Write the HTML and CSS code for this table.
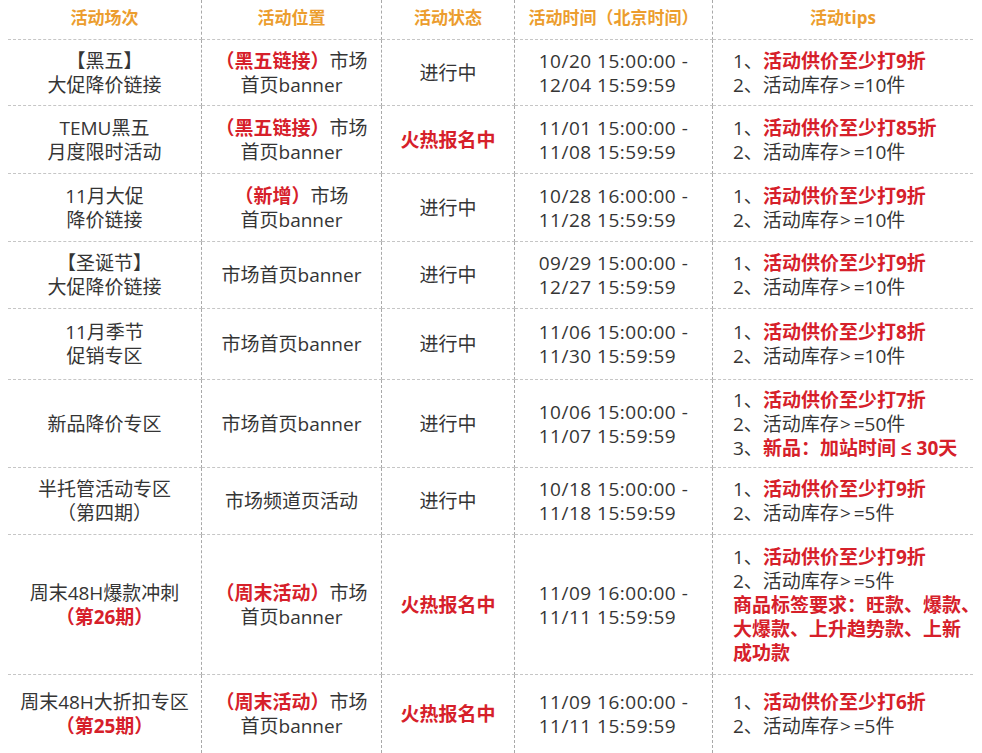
FILE: index.html
```html
<!DOCTYPE html>
<html lang="zh-CN">
<head>
<meta charset="utf-8">
<title>活动列表</title>
<link rel="stylesheet" href="styles.css">
</head>
<body>
<div class="sheet">
  <div class="cell head"><div>活动场次</div></div>
  <div class="cell head"><div>活动位置</div></div>
  <div class="cell head"><div>活动状态</div></div>
  <div class="cell head"><div>活动时间（北京时间）</div></div>
  <div class="cell head last"><div>活动tips</div></div>

  <div class="cell"><div>【黑五】<br>大促降价链接</div></div>
  <div class="cell"><div><span class="red">（黑五链接）</span>市场<br>首页banner</div></div>
  <div class="cell"><div>进行中</div></div>
  <div class="cell"><div class="block">10/20 15:00:00 -<br>12/04 15:59:59</div></div>
  <div class="cell tips last"><div>1、<span class="red">活动供价至少打9折</span></div><div>2、活动库存<span class="gt">&gt;</span>=10件</div></div>

  <div class="cell"><div>TEMU黑五<br>月度限时活动</div></div>
  <div class="cell"><div><span class="red">（黑五链接）</span>市场<br>首页banner</div></div>
  <div class="cell"><div class="red">火热报名中</div></div>
  <div class="cell"><div class="block">11/01 15:00:00 -<br>11/08 15:59:59</div></div>
  <div class="cell tips last"><div>1、<span class="red">活动供价至少打85折</span></div><div>2、活动库存<span class="gt">&gt;</span>=10件</div></div>

  <div class="cell"><div>11月大促<br>降价链接</div></div>
  <div class="cell"><div><span class="red">（新增）</span>市场<br>首页banner</div></div>
  <div class="cell"><div>进行中</div></div>
  <div class="cell"><div class="block">10/28 16:00:00 -<br>11/28 15:59:59</div></div>
  <div class="cell tips last"><div>1、<span class="red">活动供价至少打9折</span></div><div>2、活动库存<span class="gt">&gt;</span>=10件</div></div>

  <div class="cell"><div>【圣诞节】<br>大促降价链接</div></div>
  <div class="cell"><div>市场首页banner</div></div>
  <div class="cell"><div>进行中</div></div>
  <div class="cell"><div class="block">09/29 15:00:00 -<br>12/27 15:59:59</div></div>
  <div class="cell tips last"><div>1、<span class="red">活动供价至少打9折</span></div><div>2、活动库存<span class="gt">&gt;</span>=10件</div></div>

  <div class="cell"><div>11月季节<br>促销专区</div></div>
  <div class="cell"><div>市场首页banner</div></div>
  <div class="cell"><div>进行中</div></div>
  <div class="cell"><div class="block">11/06 15:00:00 -<br>11/30 15:59:59</div></div>
  <div class="cell tips last"><div>1、<span class="red">活动供价至少打8折</span></div><div>2、活动库存<span class="gt">&gt;</span>=10件</div></div>

  <div class="cell"><div>新品降价专区</div></div>
  <div class="cell"><div>市场首页banner</div></div>
  <div class="cell"><div>进行中</div></div>
  <div class="cell"><div class="block">10/06 15:00:00 -<br>11/07 15:59:59</div></div>
  <div class="cell tips last"><div>1、<span class="red">活动供价至少打7折</span></div><div>2、活动库存<span class="gt">&gt;</span>=50件</div><div>3、<span class="red">新品：加站时间 ≤ 30天</span></div></div>

  <div class="cell"><div>半托管活动专区<br>（第四期）</div></div>
  <div class="cell"><div>市场频道页活动</div></div>
  <div class="cell"><div>进行中</div></div>
  <div class="cell"><div class="block">10/18 15:00:00 -<br>11/18 15:59:59</div></div>
  <div class="cell tips last"><div>1、<span class="red">活动供价至少打9折</span></div><div>2、活动库存<span class="gt">&gt;</span>=5件</div></div>

  <div class="cell"><div>周末48H爆款冲刺<br><span class="red">（第26期）</span></div></div>
  <div class="cell"><div><span class="red">（周末活动）</span>市场<br>首页banner</div></div>
  <div class="cell"><div class="red">火热报名中</div></div>
  <div class="cell"><div class="block">11/09 16:00:00 -<br>11/11 15:59:59</div></div>
  <div class="cell tips last"><div>1、<span class="red">活动供价至少打9折</span></div><div>2、活动库存<span class="gt">&gt;</span>=5件</div><div class="red">商品标签要求：旺款、爆款、</div><div class="red">大爆款、上升趋势款、上新</div><div class="red">成功款</div></div>

  <div class="cell end"><div>周末48H大折扣专区<br><span class="red">（第25期）</span></div></div>
  <div class="cell end"><div><span class="red">（周末活动）</span>市场<br>首页banner</div></div>
  <div class="cell end"><div class="red">火热报名中</div></div>
  <div class="cell end"><div class="block">11/09 16:00:00 -<br>11/11 15:59:59</div></div>
  <div class="cell end tips last"><div>1、<span class="red">活动供价至少打6折</span></div><div>2、活动库存<span class="gt">&gt;</span>=5件</div></div>
</div>
</body>
</html>
```

FILE: styles.css
```css
html, body {
  margin: 0;
  padding: 0;
  background: #ffffff;
}

body {
  font-family: "Open Sans", "Noto Sans CJK SC", sans-serif;
  color: #353535;
  font-size: 19px;
  line-height: 24px;
}

.sheet {
  width: 965px;
  height: 753px;
  margin-left: 8px;
  display: grid;
  grid-template-columns: 194px 180px 133px 198px 260px;
  grid-template-rows: 40px 66px 68px 68px 67px 71px 88px 67px 140px 78px;
}

.cell {
  display: flex;
  align-items: center;
  justify-content: center;
  text-align: center;
  border-bottom: 1px dashed #c6c6c6;
  border-right: 1px dashed #a9a9a9;
  box-sizing: border-box;
  white-space: nowrap;
}

.cell.last {
  border-right: none;
}

.cell.end {
  border-bottom: none;
}

.head {
  color: #ec9d2e;
  font-weight: 700;
  font-size: 17px;
  padding-bottom: 4px;
}

.block {
  text-align: left;
  letter-spacing: 0.5px;
}

.tips {
  flex-direction: column;
  align-items: flex-start;
  justify-content: center;
  text-align: left;
  padding-left: 20px;
}

.gt {
  margin: 0 3px 0 1px;
}

.red {
  color: #d6202a;
  font-weight: 700;
}
```
